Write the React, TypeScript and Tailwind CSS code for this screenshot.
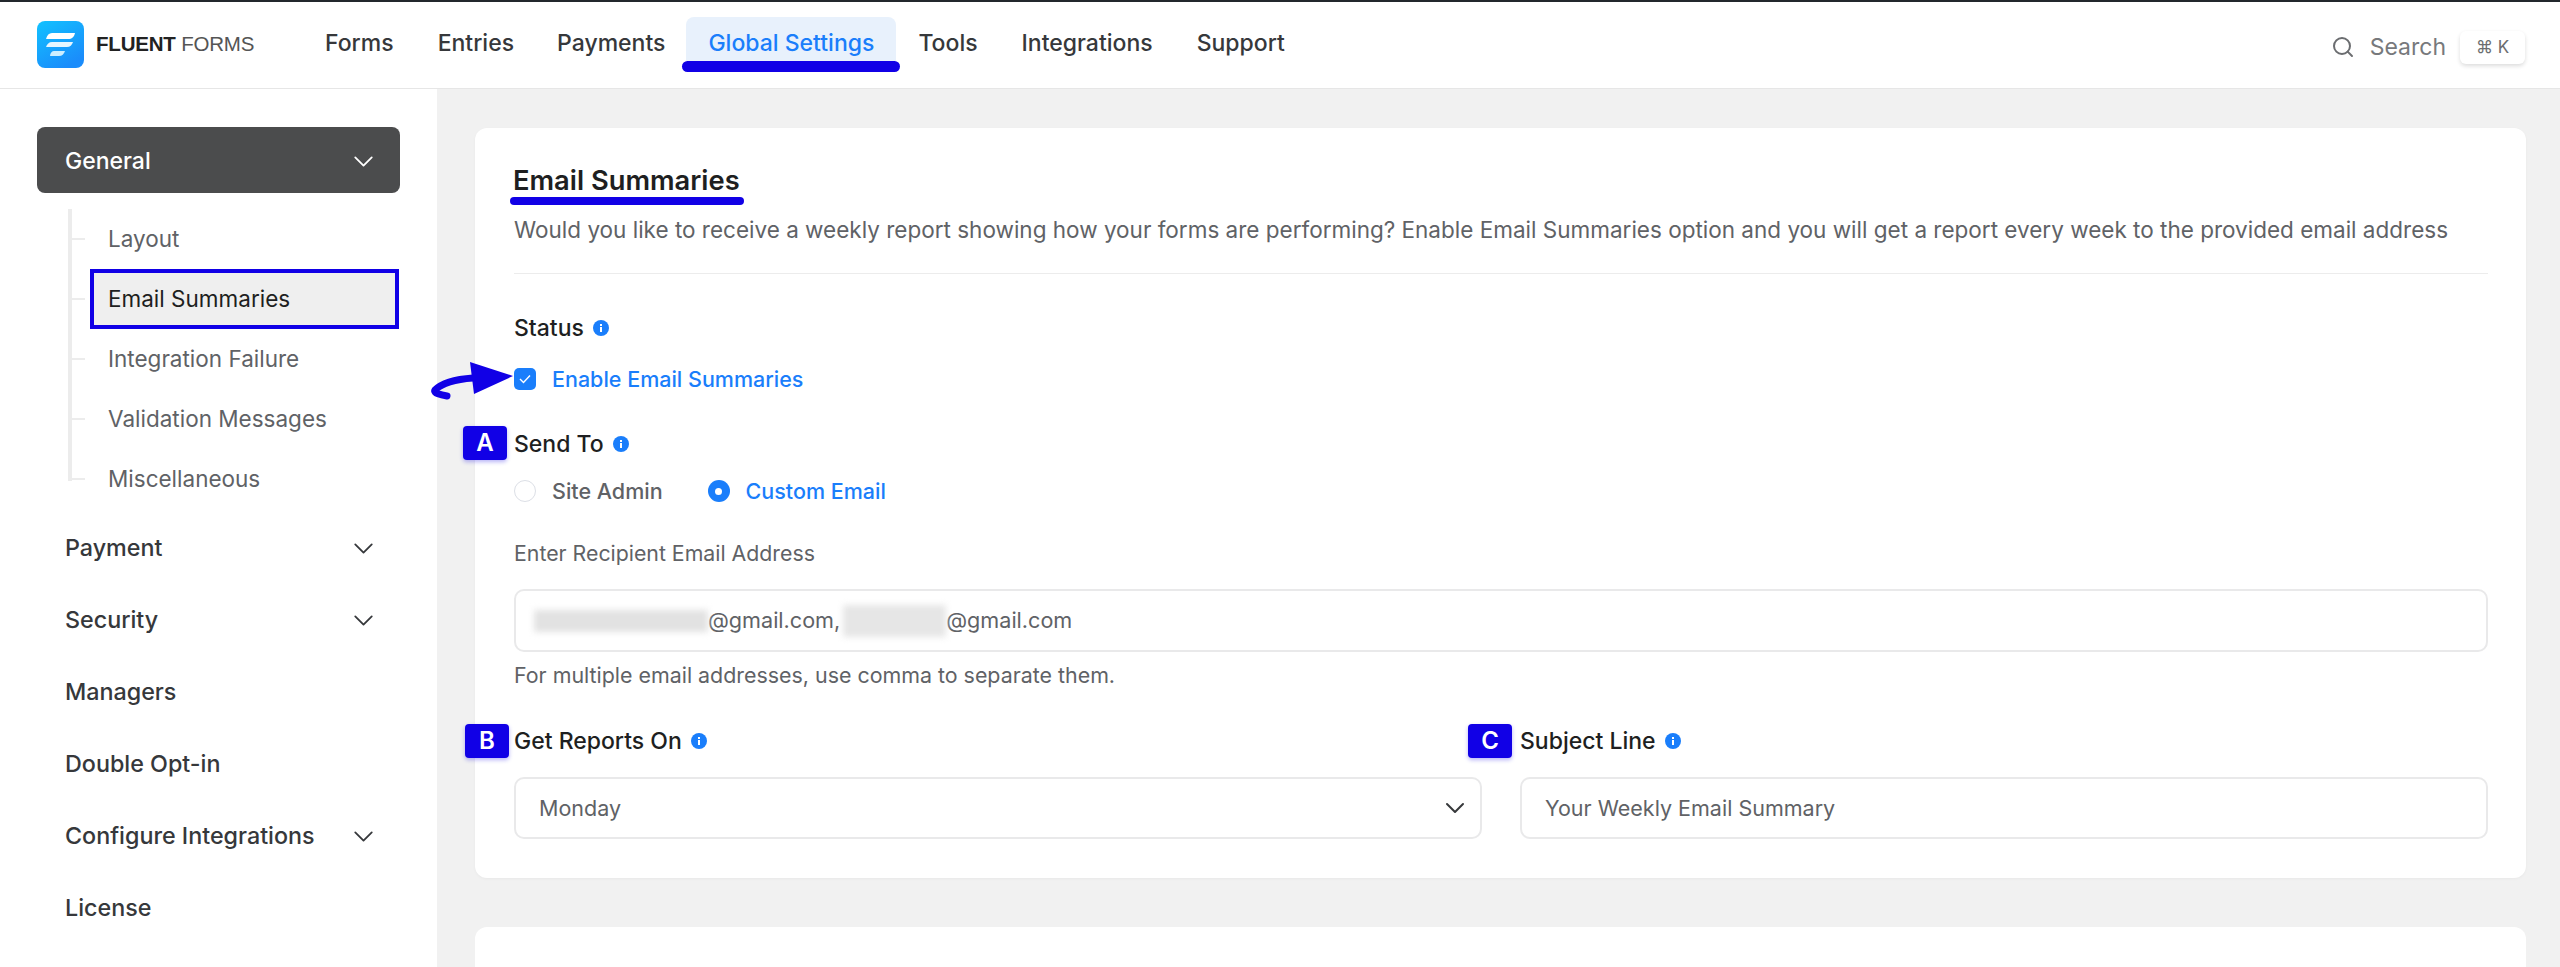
import { ChevronDown, Search } from 'lucide-react';

const navItems = ['Forms', 'Entries', 'Payments', 'Global Settings', 'Tools', 'Integrations', 'Support'];
const subItems = ['Layout', 'Email Summaries', 'Integration Failure', 'Validation Messages', 'Miscellaneous'];
const menuItems = [
  { name: 'Payment', arrow: true },
  { name: 'Security', arrow: true },
  { name: 'Managers', arrow: false },
  { name: 'Double Opt-in', arrow: false },
  { name: 'Configure Integrations', arrow: true },
  { name: 'License', arrow: false },
];

function Logo() {
  return (
    <svg width="47" height="47" viewBox="0 0 47 47">
      <defs>
        <linearGradient id="logoBg" x1="0" y1="0" x2="0.6" y2="1">
          <stop offset="0" stopColor="#12c2ff" />
          <stop offset="1" stopColor="#1a8cfb" />
        </linearGradient>
      </defs>
      <rect width="47" height="47" rx="8" fill="url(#logoBg)" />
      <path d="M15 12h23c-1 4-3 6-7 6H9c1-4 3-6 6-6z" fill="#fff" />
      <path d="M15 21h21c-1 3-3 5-6 5H9c1-3 3-5 6-5z" fill="#e6f6ff" />
      <path d="M17 30h11c-1 3-3 5-6 5h-9c0-3 2-5 4-5z" fill="#cdeeff" />
    </svg>
  );
}

function Info() {
  return (
    <svg width="16" height="16" viewBox="0 0 16 16" className="shrink-0">
      <circle cx="8" cy="8" r="8" fill="#1a7efb" />
      <rect x="7" y="7" width="2" height="5" fill="#fff" />
      <rect x="7" y="4" width="2" height="2" fill="#fff" />
    </svg>
  );
}

function Badge({ letter, className }: { letter: string; className: string }) {
  return (
    <span
      className={`absolute flex h-[34px] w-[44px] items-center justify-center rounded-[4px] bg-[#1100e6] text-[24px] font-semibold text-white shadow-[0_2px_4px_rgba(17,0,230,0.3)] ${className}`}
    >
      {letter}
    </span>
  );
}

function FieldLabel({ text }: { text: string }) {
  return (
    <div className="flex h-[34px] items-center gap-[9px] text-[23px] font-medium text-[#1e1f21]">
      {text}
      <Info />
    </div>
  );
}

export default function App() {
  return (
    <div className="relative flex h-[967px] w-[2560px] flex-col overflow-hidden bg-[#f1f1f1] font-['Inter',sans-serif]">
      <div className="h-[2px] w-full shrink-0 bg-[#23282d]" />

      <header className="flex h-[87px] shrink-0 items-start border-b border-[#e6e6e6] bg-white pl-[37px] pr-[35px]">
        <div className="mt-[19px] flex w-[288px] items-center gap-[12px]">
          <Logo />
          <span className="font-['Liberation_Sans',sans-serif] text-[20.5px] leading-none tracking-[-0.2px] text-[#222]">
            <span className="font-bold">FLUENT</span> <span className="font-light text-[#555]">FORMS</span>
          </span>
        </div>
        <nav className="flex items-start">
          {navItems.map((item) =>
            item === 'Global Settings' ? (
              <div key={item} className="relative ml-[-1px] mt-[15px]">
                <a className="flex h-[47px] items-center rounded-t-[8px] bg-[#e8f1fc] px-[22px] pt-[6px] text-[23px] font-medium text-[#1a7efb]">
                  {item}
                </a>
                <span className="absolute left-[-4px] right-[-4px] top-[44px] h-[11px] rounded-full bg-[#1100e6]" />
              </div>
            ) : (
              <a
                key={item}
                className={`mt-[15px] flex h-[47px] items-center pt-[6px] text-[23px] font-medium text-[#36383b] ${
                  item === 'Forms' ? 'pl-0 pr-[22px]' : item === 'Payments' ? 'pl-[21px] pr-[22px]' : 'px-[22px]'
                }`}
              >
                {item}
              </a>
            )
          )}
        </nav>
        <div className="ml-auto mt-[28px] flex items-center">
          <Search size={24} strokeWidth={2} className="text-[#6b6d70]" />
          <span className="ml-[15px] text-[23px] text-[#77797c]">Search</span>
          <span className="ml-[14px] flex h-[33px] w-[65px] items-center justify-center rounded-[6px] bg-white text-[17px] text-[#6b6d70] shadow-[0_2px_4px_rgba(0,0,0,0.14)]">
            ⌘ K
          </span>
        </div>
      </header>

      <div className="flex min-h-0 flex-1">
        <aside className="w-[437px] shrink-0 bg-white pl-[37px] pr-[37px] pt-[38px]">
          <div className="flex h-[66px] items-center justify-between rounded-[8px] bg-[#4b4c4d] pl-[28px] pr-[20px] pt-[2px] text-[23px] font-medium text-white">
            General
            <ChevronDown size={33} strokeWidth={1.3} />
          </div>

          <ul className="ml-[31px] mt-[16px] h-[272px] border-l-4 border-[#ececec]">
            {subItems.map((item) => {
              const active = item === 'Email Summaries';
              return (
                <li key={item} className="flex h-[60px] items-center">
                  <span className="h-[2px] w-[13px] shrink-0 bg-[#ececec]" />
                  {active ? (
                    <span className="ml-[5px] flex h-[60px] w-[309px] items-center border-[4px] border-[#1100e6] bg-[#efefef] pl-[14px] text-[22.5px] text-[#1e1f21]">
                      {item}
                    </span>
                  ) : (
                    <span className="ml-[23px] text-[22.5px] text-[#606266]">{item}</span>
                  )}
                </li>
              );
            })}
          </ul>

          <div className="mt-[31px]">
            {menuItems.map((item) => (
              <div
                key={item.name}
                className="flex h-[72px] items-center justify-between pl-[28px] pr-[20px] text-[23.3px] font-medium text-[#36383b]"
              >
                {item.name}
                {item.arrow && <ChevronDown size={33} strokeWidth={1.3} />}
              </div>
            ))}
          </div>
        </aside>

        <main className="min-w-0 flex-1 pl-[38px] pr-[34px] pt-[39px]">
          <section className="h-[750px] rounded-[12px] bg-white pl-[39px] pr-[38px] pt-[33px] shadow-[0_1px_3px_rgba(0,0,0,0.04)]">
            <h1 className="relative ml-[-1px] h-[40px] text-[27.3px] font-semibold leading-[40px] text-[#1e1f21]">
              Email Summaries
              <span className="absolute left-[-3px] top-[36px] h-[8px] w-[234px] rounded-full bg-[#1100e6]" />
            </h1>
            <p className="mt-[11px] whitespace-nowrap text-[22.5px] leading-[36px] text-[#606266]">
              Would you like to receive a weekly report showing how your forms are performing? Enable Email Summaries option and you will get a report every week to the provided email address
            </p>
            <div className="mt-[25px] h-px bg-[#ececec]" />

            <div className="mt-[37px]">
              <FieldLabel text="Status" />
            </div>
            <label className="mt-[23px] flex h-[22px] items-center gap-[16px] text-[21.5px] font-medium text-[#1a7efb]">
              <span className="flex h-[22px] w-[22px] items-center justify-center rounded-[5px] bg-[#1a7efb]">
                <svg width="12" height="10" viewBox="0 0 12 10" fill="none" stroke="#fff" strokeWidth="1.4">
                  <path d="M1 5l3.5 3.5L11 1.5" />
                </svg>
              </span>
              Enable Email Summaries
            </label>

            <div className="relative mt-[37px]">
              <Badge letter="A" className="left-[-51px] top-[-1px]" />
              <FieldLabel text="Send To" />
            </div>
            <div className="mt-[19px] flex h-[22px] items-center text-[21.5px] font-medium">
              <span className="h-[22px] w-[22px] rounded-full border border-[#dcdfe6] bg-white" />
              <span className="ml-[16px] text-[#606266]">Site Admin</span>
              <span className="ml-[45px] flex h-[22px] w-[22px] items-center justify-center rounded-full bg-[#1a7efb]">
                <span className="h-[7px] w-[7px] rounded-full bg-white" />
              </span>
              <span className="ml-[16px] text-[#1a7efb]">Custom Email</span>
            </div>

            <div className="mt-[37px] h-[28px] text-[21.3px] leading-[28px] text-[#606266]">Enter Recipient Email Address</div>
            <div className="mt-[22px] flex h-[63px] items-center rounded-[10px] border-2 border-[#e9e9ea] pl-[18px] text-[21.6px] text-[#606266]">
              <span className="h-[22px] w-[174px] bg-[#e2e2e2] blur-[3px]" />
              <span>@gmail.com,</span>
              <span className="ml-[3px] h-[32px] w-[103px] bg-[#e6e6e6] blur-[3px]" />
              <span>@gmail.com</span>
            </div>
            <p className="mt-[8px] h-[30px] text-[21.4px] leading-[30px] text-[#606266]">For multiple email addresses, use comma to separate them.</p>

            <div className="mt-[34px] grid grid-cols-2 gap-x-[38px]">
              <div className="relative min-w-0">
                <Badge letter="B" className="left-[-49px] top-[0px]" />
                <FieldLabel text="Get Reports On" />
                <div className="mt-[19px] flex h-[62px] items-center justify-between rounded-[10px] border-2 border-[#e9e9ea] pl-[23px] pr-[9px] text-[21.5px] text-[#606266]">
                  Monday
                  <ChevronDown size={32} strokeWidth={1.5} className="text-[#36383b]" />
                </div>
              </div>
              <div className="relative min-w-0">
                <Badge letter="C" className="left-[-52px] top-[0px]" />
                <FieldLabel text="Subject Line" />
                <div className="mt-[19px] flex h-[62px] items-center rounded-[10px] border-2 border-[#e9e9ea] pl-[23px] text-[21.5px] text-[#606266]">
                  Your Weekly Email Summary
                </div>
              </div>
            </div>
          </section>

          <section className="mt-[49px] h-[200px] rounded-[12px] bg-white" />
        </main>
      </div>

      <svg className="absolute left-[425px] top-[355px]" width="95" height="50" viewBox="0 0 95 50" fill="none">
        <path d="M48 23C34 24 18 27 10 35c-2 3 6 5 12 6" stroke="#1100e6" strokeWidth="7" strokeLinecap="round" />
        <path d="M45 7l43 14-39 18z" fill="#1100e6" />
      </svg>
    </div>
  );
}
